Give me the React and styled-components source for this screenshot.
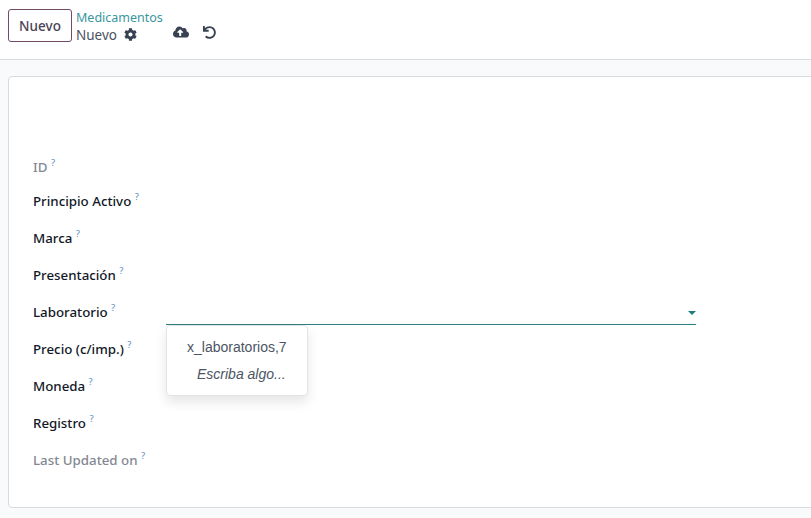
import React from "react";
import styled, { createGlobalStyle } from "styled-components";
import { FaCog, FaCloudUploadAlt, FaUndo } from "react-icons/fa";

const Global = createGlobalStyle`
  html, body { margin: 0; padding: 0; height: 100%; }
  body { background: #f9fafb; font-family: "Noto Sans", sans-serif; font-size: 13px; color: #374151; overflow: hidden; }
`;
const Page = styled.div`
  width: 811px; height: 518px; display: flex; flex-direction: column; overflow: hidden;
`;
const Toolbar = styled.header`
  height: 60px; box-sizing: border-box; flex: none; background: #fff; border-bottom: 1px solid #d8dadd;
  display: flex; align-items: flex-start; padding: 9px 0 0 8px; 
`;
const NewButton = styled.button`
  width: 64px; height: 33px; box-sizing: border-box; padding: 0; background: #fff; border: 1px solid #714b67; border-radius: 3px;
  font: 500 13.5px "Noto Sans", sans-serif; color: #4a4455;
`;
const Crumbs = styled.div`
  margin-left: 4px; display: flex; flex-direction: column; line-height: 17px;
`;
const Parent = styled.a`
  color: #017e84; font-size: 12.5px; opacity: .8;
`;
const Current = styled.div`
  display: flex; align-items: center; font-size: 13.5px; color: #4a5262; margin-top: 1px;
  svg { margin: -3px 0 0 7px; color: #374151; }
`;
const Actions = styled.div`
  display: flex; align-items: center; gap: 14px; margin: 15px 0 0 10px; color: #374151;
`;
const Card = styled.main`
  margin: 16px -20px 0 8px; height: 432px; box-sizing: border-box; background: #fff; border: 1px solid #d8dadd; border-radius: 4px;
  padding: 81px 0 0 24px; display: flex; flex-direction: column;
`;
const Row = styled.div`
  display: flex; align-items: flex-start; height: ${p => p.$h || 37}px;
`;
const Label = styled.label`
  width: 133px; flex: none; font-size: 13.3px; line-height: 18px; font-weight: 500; color: ${p => p.$muted ? "#838892" : "#111827"};
  sup { font-size: 9.5px; line-height: 0; color: #5c8fc0; margin-left: 0; font-weight: 400; vertical-align: 6px; }
`;
const Field = styled.div`
  position: relative; width: 530px; height: 22px; box-sizing: border-box; border-bottom: 1px solid #2f7d80;
`;
const Caret = styled.span`
  position: absolute; right: 0; top: 8px; width: 0; height: 0;
  border-left: 4px solid transparent; border-right: 4px solid transparent; border-top: 4px solid #1f7a80;
`;
const Menu = styled.div`
  position: absolute; left: 0; top: 22px; width: 142px; height: 71px; box-sizing: border-box; background: #fff;
  border: 1px solid #e2e4e8; border-radius: 4px; box-shadow: 0 6px 12px rgba(0,0,0,.1);
  font-family: "Liberation Sans", sans-serif; font-size: 14px; color: #4b5563; 
`;
const Item = styled.div`
  height: 27px; line-height: 27px; white-space: nowrap; padding-left: ${p => p.$indent}px; margin-top: ${p => p.$top || 0}px;
  font-style: ${p => p.$italic ? "italic" : "normal"};
`;

const Q = () => <sup>?</sup>;

export default function App() {
  return (
    <Page>
      <Global />
      <Toolbar>
        <NewButton>Nuevo</NewButton>
        <Crumbs>
          <Parent>Medicamentos</Parent>
          <Current>Nuevo <FaCog size={13} /></Current>
        </Crumbs>
        <Actions>
          <FaCloudUploadAlt size={16} />
          <FaUndo size={13} />
        </Actions>
      </Toolbar>
      <Card>
        <Row $h={34}><Label $muted>ID <Q /></Label></Row>
        <Row><Label>Principio Activo <Q /></Label></Row>
        <Row><Label>Marca <Q /></Label></Row>
        <Row><Label>Presentación <Q /></Label></Row>
        <Row>
          <Label>Laboratorio <Q /></Label>
          <Field>
            <Caret />
            <Menu>
              <Item $indent={20} $top={8}>x_laboratorios,7</Item>
              <Item $indent={30} $italic>Escriba algo...</Item>
            </Menu>
          </Field>
        </Row>
        <Row><Label>Precio (c/imp.) <Q /></Label></Row>
        <Row><Label>Moneda <Q /></Label></Row>
        <Row><Label>Registro <Q /></Label></Row>
        <Row><Label $muted>Last Updated on <Q /></Label></Row>
      </Card>
    </Page>
  );
}
